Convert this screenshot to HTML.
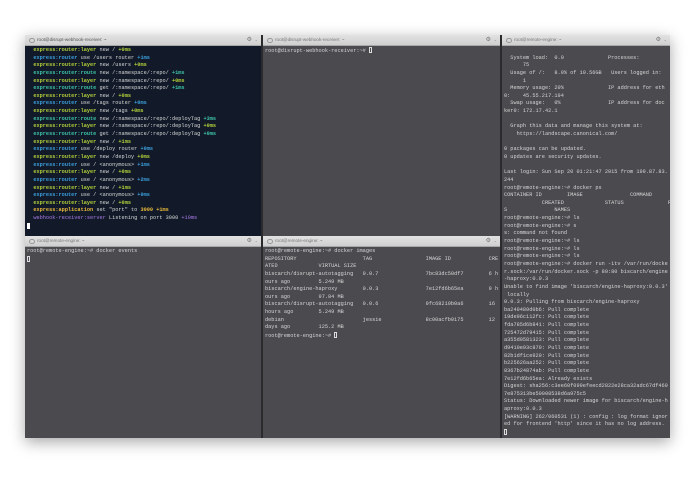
<!DOCTYPE html>
<html><head><meta charset="utf-8"><style>
html,body{margin:0;padding:0;background:#fff;width:695px;height:494px;overflow:hidden;position:relative}
.win{position:absolute;left:25px;top:35px;width:645px;height:403px;background:#2b2b2e;box-shadow:0 4px 14px rgba(0,0,0,.35)}
.pane{position:absolute;overflow:hidden}
.tb{position:absolute;left:0;right:0;top:0;height:10px;background:linear-gradient(#e2e2e2,#cfcfcf);border-bottom:1px solid #a8a8a8;font:4.6px "Liberation Sans",sans-serif;color:#777;line-height:10px}
.tb .c{position:absolute;left:4px;top:2.8px;width:3.5px;height:3.5px;border:0.7px solid #999;border-radius:50%}
.tb .t{position:absolute;left:12px}
.tb .g{position:absolute;right:9px;top:0;font-size:6px;color:#777}
.tb .v{position:absolute;right:3px;top:0;font-size:4px;color:#888}
.body{position:absolute;left:0;right:0;top:11px;bottom:0;background:#4a4a4f}
pre{margin:0;padding:1px 0 0 2px;font:5.25px/7.64px "Liberation Mono",monospace;color:#d6d6d6;white-space:pre}
.dark{background:#121a29}
.y{color:#b3cf3a;font-weight:bold}.b{color:#3c9fdc;font-weight:bold}.r{color:#3dc3a6;font-weight:bold}.o{color:#e9b93a;font-weight:bold}.p{color:#a97ae6}
.cur{display:inline-block;width:3px;height:6px;border:0.7px solid #ddd;vertical-align:-1px;box-sizing:border-box}
.curf{display:inline-block;width:3px;height:6px;background:#fff;vertical-align:-1px}
</style></head><body>
<div class="win">
<div class="pane" style="left:0;top:0;width:236px;height:201px">
<div class="tb" style="color:#555"><span class="c"></span><span class="t">root@disrupt-webhook-receiver: ~</span><span class="g">⚙</span><span class="v">⌄</span></div>
<div class="body dark"><pre>  <span class="y">express:router:layer</span> new / <span class="y">+0ms</span>
  <span class="b">express:router</span> use /users router <span class="b">+1ms</span>
  <span class="y">express:router:layer</span> new /users <span class="y">+0ms</span>
  <span class="r">express:router:route</span> new /:namespace/:repo/ <span class="r">+1ms</span>
  <span class="y">express:router:layer</span> new /:namespace/:repo/ <span class="y">+0ms</span>
  <span class="r">express:router:route</span> get /:namespace/:repo/ <span class="r">+1ms</span>
  <span class="y">express:router:layer</span> new / <span class="y">+0ms</span>
  <span class="b">express:router</span> use /tags router <span class="b">+0ms</span>
  <span class="y">express:router:layer</span> new /tags <span class="y">+0ms</span>
  <span class="r">express:router:route</span> new /:namespace/:repo/:deployTag <span class="r">+3ms</span>
  <span class="y">express:router:layer</span> new /:namespace/:repo/:deployTag <span class="y">+0ms</span>
  <span class="r">express:router:route</span> get /:namespace/:repo/:deployTag <span class="r">+0ms</span>
  <span class="y">express:router:layer</span> new / <span class="y">+1ms</span>
  <span class="b">express:router</span> use /deploy router <span class="b">+0ms</span>
  <span class="y">express:router:layer</span> new /deploy <span class="y">+0ms</span>
  <span class="b">express:router</span> use / &lt;anonymous&gt; <span class="b">+1ms</span>
  <span class="y">express:router:layer</span> new / <span class="y">+0ms</span>
  <span class="b">express:router</span> use / &lt;anonymous&gt; <span class="b">+2ms</span>
  <span class="y">express:router:layer</span> new / <span class="y">+1ms</span>
  <span class="b">express:router</span> use / &lt;anonymous&gt; <span class="b">+0ms</span>
  <span class="y">express:router:layer</span> new / <span class="y">+0ms</span>
  <span class="o">express:application</span> set "port" to <span class="o">3000</span> <span class="o">+1ms</span>
  <span class="p">webhook-receiver:server</span> Listening on port 3000 <span class="p">+10ms</span>
<span class="curf"></span></pre></div></div>
<div class="pane" style="left:238px;top:0;width:237px;height:201px">
<div class="tb"><span class="c"></span><span class="t">root@disrupt-webhook-receiver: ~</span><span class="g">⚙</span><span class="v">⌄</span></div>
<div class="body"><pre>root@disrupt-webhook-receiver:~# <span class="cur"></span></pre></div></div>
<div class="pane" style="left:0;top:201px;width:236px;height:202px">
<div class="tb"><span class="c"></span><span class="t">root@remote-engine: ~</span><span class="g">⚙</span><span class="v">⌄</span></div>
<div class="body"><pre>root@remote-engine:~# docker events
<span class="cur"></span></pre></div></div>
<div class="pane" style="left:238px;top:201px;width:237px;height:202px">
<div class="tb"><span class="c"></span><span class="t">root@remote-engine: ~</span><span class="g">⚙</span><span class="v">⌄</span></div>
<div class="body"><pre>root@remote-engine:~# docker images
REPOSITORY                     TAG                 IMAGE ID            CRE
ATED             VIRTUAL SIZE
biscarch/disrupt-autotagging   0.0.7               7bc83dc50df7        6 h
ours ago         5.249 MB
biscarch/engine-haproxy        0.0.3               7e12fd6b65ea        9 h
ours ago         97.84 MB
biscarch/disrupt-autotagging   0.0.6               9fc68219b0a6        16 
hours ago        5.249 MB
debian                         jessie              8c00acfb0175        12 
days ago         125.2 MB
root@remote-engine:~# <span class="cur"></span></pre></div></div>
<div class="pane" style="left:477px;top:0;width:168px;height:403px">
<div class="tb"><span class="c"></span><span class="t">root@remote-engine: ~</span><span class="g">⚙</span><span class="v">⌄</span></div>
<div class="body"><pre>

  System load:  0.0              Processes:
      75
  Usage of /:   8.9% of 19.56GB   Users logged in:
      1
  Memory usage: 20%              IP address for eth
0:    45.55.217.194
  Swap usage:   0%               IP address for doc
ker0: 172.17.42.1

  Graph this data and manage this system at:
    https://landscape.canonical.com/

0 packages can be updated.
0 updates are security updates.

Last login: Sun Sep 20 01:21:47 2015 from 199.87.83.
244
root@remote-engine:~# docker ps
CONTAINER ID        IMAGE               COMMAND
            CREATED             STATUS              PORT
S               NAMES
root@remote-engine:~# ls
root@remote-engine:~# s
s: command not found
root@remote-engine:~# ls
root@remote-engine:~# ls
root@remote-engine:~# ls
root@remote-engine:~# docker run -itv /var/run/docke
r.sock:/var/run/docker.sock -p 80:80 biscarch/engine
-haproxy:0.0.3
Unable to find image 'biscarch/engine-haproxy:0.0.3'
 locally
0.0.3: Pulling from biscarch/engine-haproxy
ba249489d0b6: Pull complete
19de96c112fc: Pull complete
fda785d6b841: Pull complete
725472d79415: Pull complete
a355d9581323: Pull complete
d9410e93c870: Pull complete
82b1df1ce920: Pull complete
b225626aa252: Pull complete
8367b24874ab: Pull complete
7e12fd6b65ea: Already exists
Digest: sha256:c3ee60f099efeecd2822e28ca32adc67df460
7e875313be50008538d6a975c5
Status: Downloaded newer image for biscarch/engine-h
aproxy:0.0.3
[WARNING] 262/060531 (1) : config : log format ignor
ed for frontend 'http' since it has no log address.
<span class="cur"></span></pre></div></div>
</div>
</body></html>
